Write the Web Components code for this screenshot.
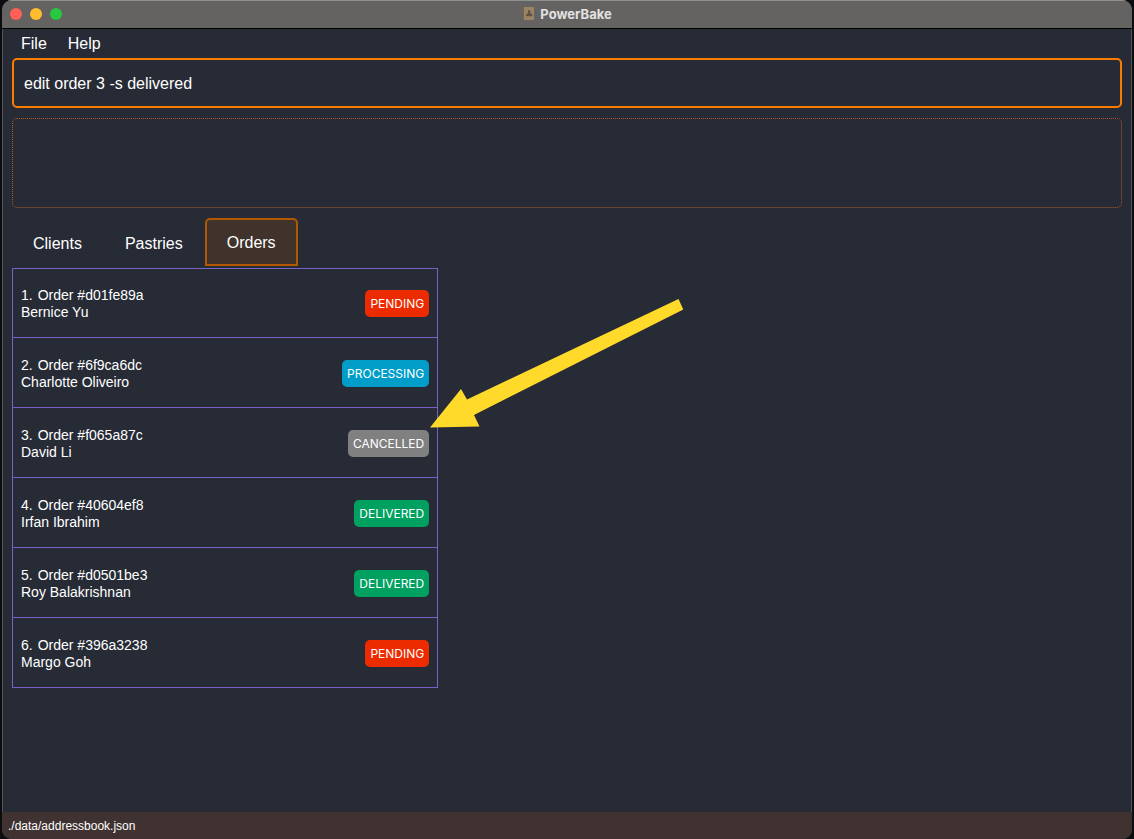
<!DOCTYPE html>
<html lang="en">
<head>
<meta charset="utf-8">
<title>PowerBake</title>
<style>
  html, body { height: 100%; }
  body { margin: 0; background: #0c0d0e; color: #fff; font-family: "Liberation Sans", Arial, sans-serif; }
</style>
</head>
<body>
<power-bake></power-bake>
<script>
const define = (name, html, setup) => {
  const template = document.createElement("template");
  template.innerHTML = "<style>*{box-sizing:border-box}</style>" + html;
  customElements.define(name, class extends HTMLElement {
    constructor() {
      super();
      this.attachShadow({ mode: "open" }).append(template.content.cloneNode(true));
    }
    connectedCallback() { if (setup) setup(this, this.shadowRoot); }
  });
};

define("title-bar", `
<style>
  :host { display: grid; grid-template-columns: 1fr auto 1fr; align-items: center; height: 29px; padding: 0 8px 2px;
    background: #656361; border-top: 1px solid #92908e; border-bottom: 1px solid #000; box-sizing: border-box; flex: none; }
  .lights { display: flex; gap: 8px; }
  button { width: 12px; height: 12px; border: 0; border-radius: 50%; padding: 0; }
  .close { background: #ff5f57; }
  .min { background: #febc2e; }
  .max { background: #28c840; }
  .title { display: flex; align-items: center; gap: 6px; font: 700 13px/16px Inter, sans-serif; color: #e3e2e1; }
  svg { display: block; }
</style>
<div class="lights">
  <button class="close" aria-label="Close"></button>
  <button class="min" aria-label="Minimize"></button>
  <button class="max" aria-label="Zoom"></button>
</div>
<div class="title">
  <svg width="12" height="13" viewBox="0 0 12 13" aria-hidden="true">
    <rect width="12" height="13" rx="1" fill="#9b8465"/><rect width="2" height="13" fill="#716252"/>
    <path d="M6 6.8V4.6a1.2 1.5 0 0 1 2.4 0v2.2h1.8v2.4H4.2V6.8z" fill="#5d5044"/>
  </svg>
  <span><slot></slot></span>
</div>`);

define("menu-bar", `
<style>
  :host { display: flex; gap: 21px; padding: 0 19px; height: 29px; align-items: center; flex: none; box-sizing: border-box; }
  ::slotted(button) { background: none; border: 0; padding: 0; color: #fff; font: 16px/24px "Liberation Sans", Arial, sans-serif; }
</style><slot></slot>`);

define("command-box", `
<style>
  :host { display: block; }
  input { display: block; width: 100%; height: 50px; padding: 2px 10px 0; background: transparent; color: #fff;
    border: 2px solid #f97b00; border-radius: 5px; outline: 0; font: 16px/24px "Liberation Sans", Arial, sans-serif; }
</style>
<input type="text" aria-label="Command" value="edit order 3 -s delivered" spellcheck="false">`);

define("result-display", `
<style>:host { display: block; height: 90px; border: 1px dotted #b4572a; border-radius: 5px; box-sizing: border-box; }</style>
<div role="status"><slot></slot></div>`);

define("tab-strip", `
<style>
  :host { display: flex; gap: 1px; height: 48px; }
  ::slotted(button) { box-sizing: border-box; background: none; border: 2px solid transparent; padding: 4px 19px 0;
    color: #fff; font: 16px/24px "Liberation Sans", Arial, sans-serif; }
  ::slotted(button[aria-selected=true]) { background: #40332b; border-color: #b25900; border-radius: 5px 5px 0 0; padding: 2px 20px 0; }
</style><slot></slot>`);

define("status-badge", `
<style>
  :host { display: block; padding: 0 5px; border-radius: 5px; font: 12px/27px Inter, sans-serif; color: #fff; background: #808080; }
  :host([kind=pending]) { background: #ed2b00; }
  :host([kind=processing]) { background: #009dc9; }
  :host([kind=delivered]) { background: #00a160; }
</style><slot></slot>`);

define("order-card", `
<style>
  :host { display: flex; justify-content: space-between; align-items: center; height: 70px; padding: 1px 8px 0;
    border: solid #7862c6; border-width: 0 1px 1px; box-sizing: border-box; }
  :host(:first-child) { border-top-width: 1px; padding-top: 0; }
  .text { padding-top: 2px; font-size: 14px; line-height: 17px; }
  .head { display: flex; gap: 5px; }
</style>
<div class="text">
  <div class="head"><span class="index"></span><span class="code"></span></div>
  <div class="client"></div>
</div>
<status-badge></status-badge>`, (host, root) => {
  const { index, code, client, status } = host.dataset;
  root.querySelector(".index").textContent = index + ".";
  root.querySelector(".code").textContent = "Order #" + code;
  root.querySelector(".client").textContent = client;
  const badge = root.querySelector("status-badge");
  badge.setAttribute("kind", status);
  badge.textContent = status.toUpperCase();
});

define("callout-arrow", `
<style>:host { display: block; position: absolute; left: 418px; top: 31px; pointer-events: none; } svg { display: block; }</style>
<svg width="254" height="129" viewBox="430 299 254 129" aria-hidden="true">
  <path d="M430 427.5 461 389 467 399.5 678.5 299 683.3 309.5 474 415 479.5 426.5z" fill="#ffda2b"/>
</svg>`);

define("status-footer", `
<style>:host { display: block; height: 27px; padding: 1px 6px 0; background: #403231; font-size: 12px; line-height: 26px; box-sizing: border-box; flex: none; }</style>
<slot></slot>`);

define("power-bake", `
<style>
  :host { display: flex; min-height: 100%; padding: 0 2px; }
  .window { flex: 1; display: flex; flex-direction: column; overflow: hidden; background: #272b36; border-radius: 10px;
    box-shadow: inset 1px 0 #53555e, inset -1px 0 #53555e; }
  main { flex: 1; display: flex; flex-direction: column; gap: 10px; padding: 0 10px 10px; }
  .lists { display: grid; grid-template-columns: 38.4% 1fr; margin-top: -8px; position: relative; align-items: start; }
</style>
<div class="window">
  <title-bar>PowerBake</title-bar>
  <menu-bar><button>File</button><button>Help</button></menu-bar>
  <main>
    <command-box></command-box>
    <result-display></result-display>
    <tab-strip role="tablist">
      <button role="tab" aria-selected="false">Clients</button>
      <button role="tab" aria-selected="false">Pastries</button>
      <button role="tab" aria-selected="true">Orders</button>
    </tab-strip>
    <section class="lists">
      <div role="list">
        <order-card role="listitem" data-index="1" data-code="d01fe89a" data-client="Bernice Yu" data-status="pending"></order-card>
        <order-card role="listitem" data-index="2" data-code="6f9ca6dc" data-client="Charlotte Oliveiro" data-status="processing"></order-card>
        <order-card role="listitem" data-index="3" data-code="f065a87c" data-client="David Li" data-status="cancelled"></order-card>
        <order-card role="listitem" data-index="4" data-code="40604ef8" data-client="Irfan Ibrahim" data-status="delivered"></order-card>
        <order-card role="listitem" data-index="5" data-code="d0501be3" data-client="Roy Balakrishnan" data-status="delivered"></order-card>
        <order-card role="listitem" data-index="6" data-code="396a3238" data-client="Margo Goh" data-status="pending"></order-card>
      </div>
      <callout-arrow></callout-arrow>
    </section>
  </main>
  <status-footer>./data/addressbook.json</status-footer>
</div>`);
</script>
</body>
</html>
